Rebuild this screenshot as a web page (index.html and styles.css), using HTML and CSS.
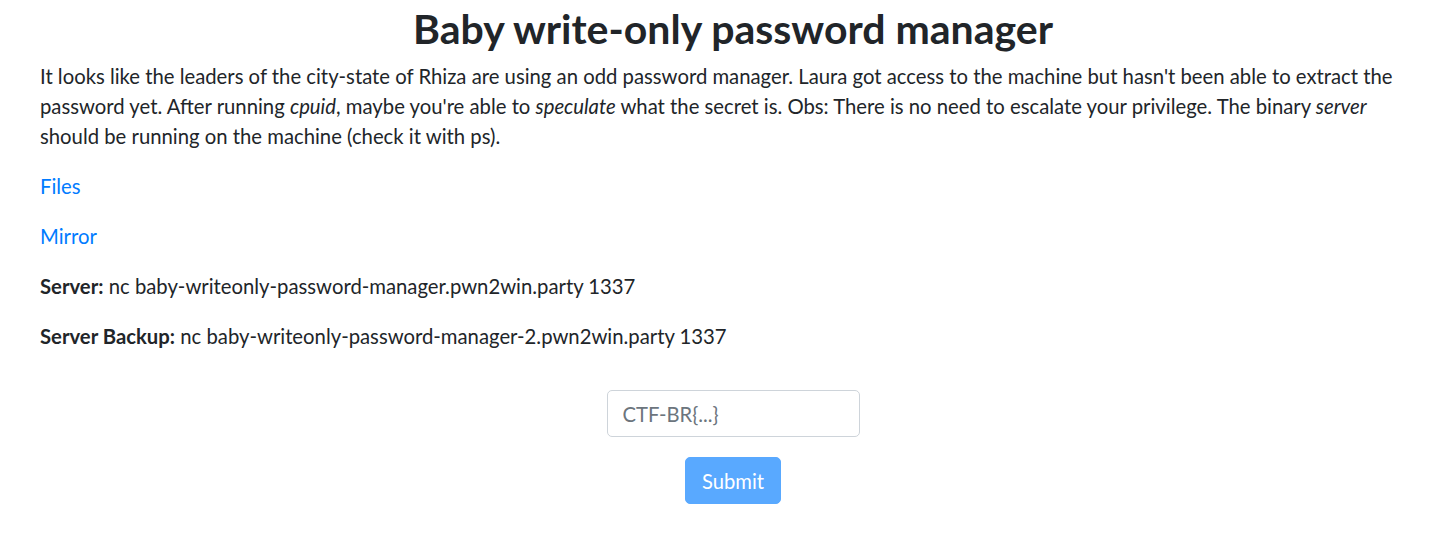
FILE: index.html
```html
<!DOCTYPE html>
<html lang="en">
<head>
<meta charset="utf-8">
<title>Baby write-only password manager</title>
<link rel="stylesheet" href="styles.css">
</head>
<body>
<main class="container">
  <h1 class="title">Baby write-only password manager</h1>
  <p class="intro">It looks like the leaders of the city-state of Rhiza are using an odd password manager. Laura got access to the machine but hasn't been able to extract the password yet. After running <em>cpuid</em>, maybe you're able to <em>speculate</em> what the secret is. Obs: There is no need to escalate your privilege. The binary <em>server</em> should be running on the machine (check it with ps).</p>
  <p><a href="#">Files</a></p>
  <p><a href="#">Mirror</a></p>
  <p><strong>Server:</strong> nc baby-writeonly-password-manager.pwn2win.party 1337</p>
  <p><strong>Server Backup:</strong> nc baby-writeonly-password-manager-2.pwn2win.party 1337</p>
  <form class="flag-form">
    <div class="form-group">
      <input class="form-control" type="text" placeholder="CTF-BR{...}">
    </div>
    <button class="btn" type="button" disabled>Submit</button>
  </form>
</main>
</body>
</html>
```
FILE: styles.css
```css
html, body {
  margin: 0;
  padding: 0;
  background: #fff;
}
body {
  font-family: Lato, "Open Sans", sans-serif;
  font-size: 20.3px;
  line-height: 30px;
  color: #212529;
}
.container {
  padding: 0 30px 0 40px;
}
.title {
  margin: 5px 0 8px;
  font-size: 41px;
  line-height: 48px;
  font-weight: 700;
  text-align: center;
  color: #212529;
}
p {
  margin: 0 0 20px;
}
.intro {
  margin-right: 14px;
}
a {
  color: #007bff;
  text-decoration: none;
}
em {
  font-style: italic;
}
strong {
  font-weight: 700;
}
.flag-form {
  margin-top: 39px;
  display: flex;
  flex-direction: column;
  align-items: center;
}
.form-group {
  margin-bottom: 20px;
}
.form-control {
  box-sizing: border-box;
  width: 253px;
  height: 47px;
  padding: 7px 15px;
  font-family: inherit;
  font-size: 20.2px;
  color: #495057;
  background: #fff;
  border: 1px solid #ced4da;
  border-radius: 5px;
  outline: none;
}
.form-control::placeholder {
  color: #6c757d;
  opacity: 1;
}
.btn {
  box-sizing: border-box;
  height: 47px;
  width: 96px;
  padding: 0 15px;
  font-family: inherit;
  font-size: 20.2px;
  color: #fff;
  background: #59a9ff;
  border: 1px solid #59a9ff;
  border-radius: 5px;
}
```
